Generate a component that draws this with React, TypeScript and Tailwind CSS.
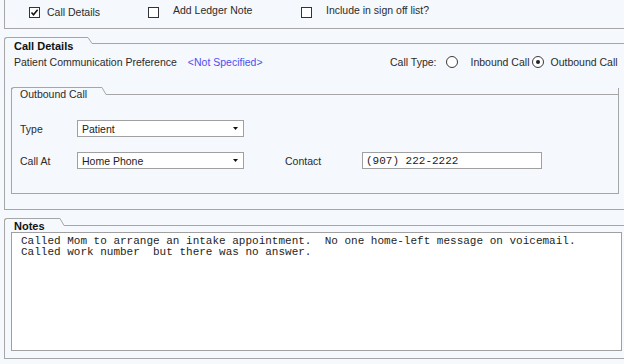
import React from "react";

const sans = "font-['Liberation_Sans',Arial,sans-serif]";
const mono = "font-['Liberation_Mono','Courier_New',monospace]";

// tab-shaped top edge of a group box
function GroupTab({ tabClass, h }: { tabClass: string; h: number }) {
  return (
    <div className="flex" style={{ height: h }}>
      <div className={`${tabClass} shrink-0 border-t border-l border-[#a6a6a6] rounded-tl-[3px]`} />
      <svg width={4} height={h} className="shrink-0 block">
        <line x1={0} y1={0.5} x2={4} y2={h - 0.5} stroke="#a6a6a6" strokeWidth={1} />
      </svg>
      <div className="flex-1 border-b border-[#a6a6a6]" />
    </div>
  );
}

function Checkbox({ checked }: { checked?: boolean }) {
  return (
    <div className="w-[11px] h-[11px] shrink-0 border border-[#333] bg-white flex items-center justify-center">
      {checked && (
        <svg width="9" height="9" viewBox="0 0 9 9">
          <path d="M1.5 4.5 L3.5 6.8 L7.6 1.8" fill="none" stroke="#111" strokeWidth="1.5" />
        </svg>
      )}
    </div>
  );
}

function Radio({ checked }: { checked?: boolean }) {
  return (
    <div className="w-[12px] h-[12px] shrink-0 rounded-full border border-[#3a3a3a] bg-white flex items-center justify-center">
      {checked && <div className="w-[4px] h-[4px] rounded-full bg-[#222]" />}
    </div>
  );
}

function Select({ value }: { value: string }) {
  return (
    <div className="w-[167px] h-[17px] border border-[#a0a0a0] bg-white flex items-center pl-[4px] pr-[5px]">
      <span className="flex-1 text-[10.5px] leading-[12px] text-[#222]">{value}</span>
      <svg width="5" height="3" viewBox="0 0 5 3">
        <path d="M0 0 H5 L2.5 3 Z" fill="#111" />
      </svg>
    </div>
  );
}

export default function App() {
  return (
    <div className={`w-[624px] h-[364px] overflow-hidden bg-[#f5f8fc] text-[#2b2b2b] ${sans}`}>

      {/* top options strip */}
      <div className="ml-[4px] h-[29px] border-l border-b border-[#a6a6a6] flex items-start text-[10.5px] leading-[12px]">
        <div className="ml-[24px] w-[119px] flex items-start">
          <div className="mt-[7px]"><Checkbox checked /></div>
          <span className="ml-[7px] mt-[6px]">Call Details</span>
        </div>
        <div className="w-[153px] flex items-start">
          <div className="mt-[7px]"><Checkbox /></div>
          <span className="ml-[14px] mt-[4px]">Add Ledger Note</span>
        </div>
        <div className="flex items-start">
          <div className="mt-[7px]"><Checkbox /></div>
          <span className="ml-[14px] mt-[4px]">Include in sign off list?</span>
        </div>
      </div>

      {/* Call Details group */}
      <div className="ml-[4px] mt-[8px]">
        <GroupTab tabClass="w-[84px]" h={7} />
        <div className="border-l border-b border-[#a6a6a6] pb-[15px]">
          <div className="pl-[9px] -mt-[4px] text-[11px] leading-[12px] font-bold text-[#111]">Call Details</div>

          <div className="mt-[4px] flex items-center text-[10.5px] leading-[12px]">
            <div className="w-[385px] pl-[9px] flex">
              <span>Patient Communication Preference</span>
              <span className="ml-[11px] text-[#4f4ff0]">&lt;Not Specified&gt;</span>
            </div>
            <span>Call Type:</span>
            <div className="ml-[9px]"><Radio /></div>
            <span className="ml-[13px]">Inbound Call</span>
            <div className="ml-[3px]"><Radio checked /></div>
            <span className="ml-[6px]">Outbound Call</span>
          </div>

          {/* Outbound Call group */}
          <div className="ml-[6px] mt-[19px] w-[608px]">
            <GroupTab tabClass="w-[91px]" h={8} />
            <div className="border-l border-r border-b border-[#a6a6a6] pb-[24px] text-[10.5px] leading-[12px]">
              <div className="pl-[8px] -mt-[7px]">Outbound Call</div>

              <div className="mt-[20px] pl-[8px] flex items-center">
                <span className="w-[57px]">Type</span>
                <Select value="Patient" />
              </div>

              <div className="mt-[15px] pl-[8px] flex items-center">
                <span className="w-[57px]">Call At</span>
                <Select value="Home Phone" />
                <span className="ml-[41px] w-[77px]">Contact</span>
                <div className="w-[180px] h-[17px] border border-[#a0a0a0] bg-white flex items-center pl-[3px]">
                  <span className={`${mono} text-[11px] leading-[12px] text-[#222]`}>(907) 222-2222</span>
                </div>
              </div>
            </div>
          </div>
        </div>
      </div>

      {/* Notes group */}
      <div className="ml-[4px] mt-[8px]">
        <GroupTab tabClass="w-[56px]" h={8} />
        <div className="border-l border-b border-[#a6a6a6] pb-[7px]">
          <div className="pl-[9px] -mt-[6px] text-[11px] leading-[12px] font-bold text-[#111]">Notes</div>
          <div className={`ml-[6px] w-[611px] h-[119px] border border-[#a0a0a0] bg-white pl-[9px] pt-[3px] ${mono} text-[11px] leading-[11px] text-[#1e1e1e] whitespace-pre`}>
            {"Called Mom to arrange an intake appointment.  No one home-left message on voicemail.\nCalled work number  but there was no answer."}
          </div>
        </div>
      </div>

    </div>
  );
}
